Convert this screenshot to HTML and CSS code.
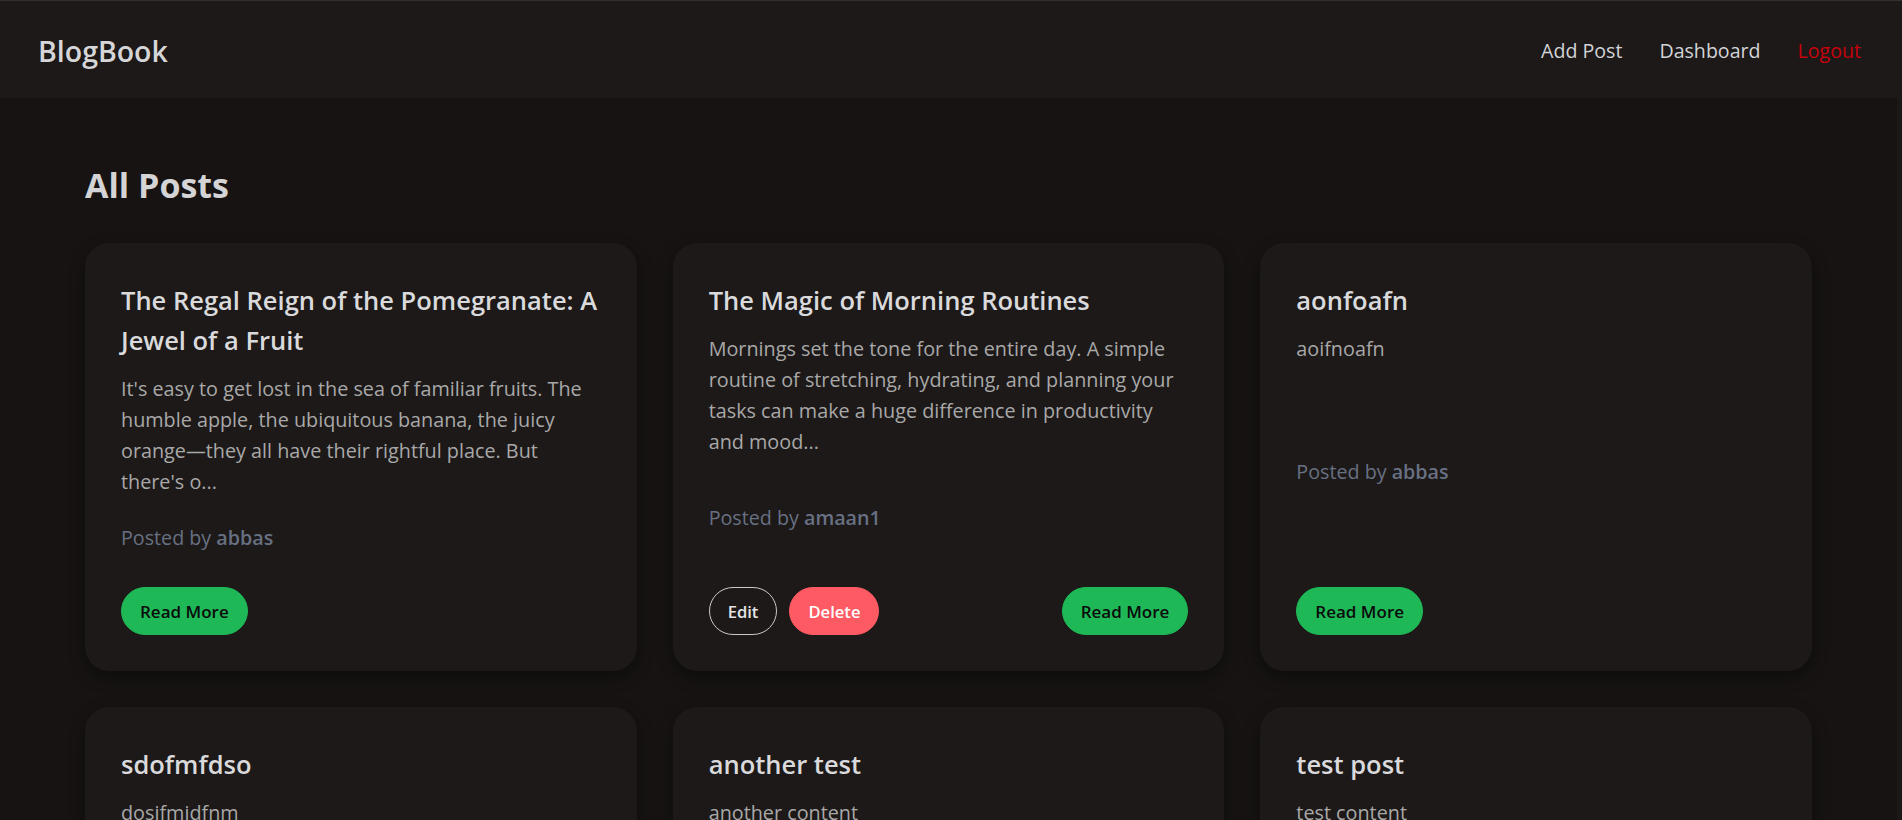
FILE: index.html
```html
<!DOCTYPE html>
<html lang="en">
<head>
<meta charset="utf-8">
<title>BlogBook</title>
<link rel="stylesheet" href="styles.css">
</head>
<body>
<header class="navbar">
  <a class="brand" href="#">BlogBook</a>
  <nav class="nav-links">
    <a href="#">Add Post</a>
    <a href="#">Dashboard</a>
    <a href="#" class="logout">Logout</a>
  </nav>
</header>
<main class="main">
  <h1 class="page-title">All Posts</h1>
  <div class="post-grid">
    <article class="post-card">
      <div class="post-body">
        <h2 class="post-title">The Regal Reign of the Pomegranate: A Jewel of a Fruit</h2>
        <p class="post-excerpt">It's easy to get lost in the sea of familiar fruits. The humble apple, the ubiquitous banana, the juicy orange—they all have their rightful place. But there's o...</p>
      </div>
      <p class="post-author">Posted by <strong>abbas</strong></p>
      <div class="post-actions">
        <a class="btn btn-read" href="#">Read More</a>
      </div>
    </article>
    <article class="post-card">
      <div class="post-body">
        <h2 class="post-title">The Magic of Morning Routines</h2>
        <p class="post-excerpt">Mornings set the tone for the entire day. A simple routine of stretching, hydrating, and planning your tasks can make a huge difference in productivity and mood...</p>
      </div>
      <p class="post-author">Posted by <strong>amaan1</strong></p>
      <div class="post-actions">
        <div class="owner-actions">
          <a class="btn btn-edit" href="#">Edit</a>
          <a class="btn btn-delete" href="#">Delete</a>
        </div>
        <a class="btn btn-read" href="#">Read More</a>
      </div>
    </article>
    <article class="post-card">
      <div class="post-body">
        <h2 class="post-title">aonfoafn</h2>
        <p class="post-excerpt">aoifnoafn</p>
      </div>
      <p class="post-author">Posted by <strong>abbas</strong></p>
      <div class="post-actions">
        <a class="btn btn-read" href="#">Read More</a>
      </div>
    </article>
    <article class="post-card">
      <div class="post-body">
        <h2 class="post-title">sdofmfdso</h2>
        <p class="post-excerpt">dosifmidfnm</p>
      </div>
      <p class="post-author">Posted by <strong>abbas</strong></p>
      <div class="post-actions">
        <a class="btn btn-read" href="#">Read More</a>
      </div>
    </article>
    <article class="post-card">
      <div class="post-body">
        <h2 class="post-title">another test</h2>
        <p class="post-excerpt">another content</p>
      </div>
      <p class="post-author">Posted by <strong>abbas</strong></p>
      <div class="post-actions">
        <a class="btn btn-read" href="#">Read More</a>
      </div>
    </article>
    <article class="post-card">
      <div class="post-body">
        <h2 class="post-title">test post</h2>
        <p class="post-excerpt">test content</p>
      </div>
      <p class="post-author">Posted by <strong>abbas</strong></p>
      <div class="post-actions">
        <a class="btn btn-read" href="#">Read More</a>
      </div>
    </article>
  </div>
</main>
</body>
</html>
```
FILE: styles.css
```css
* {
  box-sizing: border-box;
}

html {
  background: #1b1918;
}

body {
  margin: 0;
  background: #1b1918;
  font-family: "Open Sans", "Noto Sans", sans-serif;
  color: #dcdcdc;
}

a {
  text-decoration: none;
  color: inherit;
}

.navbar {
  height: 98px;
  border-top: 1px solid #303030;
  background: #1c1918;
  display: flex;
  align-items: center;
  justify-content: space-between;
  padding: 2px 41px 0 38px;
}

.brand {
  font-size: 28.5px;
  font-weight: 600;
  color: #d6d6d8;
}

.nav-links {
  display: flex;
  gap: 37px;
  font-size: 19.6px;
}

.nav-links a {
  color: #d2d3d6;
}

.nav-links .logout {
  color: #c8000c;
}

.main {
  margin-right: 5px;
  background: #161312;
  padding: 65px 85px 60px;
}

.page-title {
  margin: 0 0 36px;
  font-size: 34px;
  line-height: 44px;
  font-weight: 700;
  color: #d4d4d6;
}

.post-grid {
  display: grid;
  grid-template-columns: repeat(3, 1fr);
  gap: 36px;
}

.post-card {
  background: #1c1918;
  border-radius: 24px;
  padding: 37px 36px 36px;
  display: flex;
  flex-direction: column;
  justify-content: space-between;
  box-shadow: 0 6px 16px rgba(0, 0, 0, 0.35);
}

.post-title {
  margin: 0;
  font-size: 25.5px;
  line-height: 40px;
  font-weight: 600;
  color: #dadadc;
}

.post-excerpt {
  margin: 13px 0 0;
  font-size: 19.8px;
  line-height: 31px;
  color: #a9a8a8;
}

.post-author {
  margin: 26px 0 0;
  font-size: 19.7px;
  line-height: 30px;
  color: #687083;
}

.post-author strong {
  font-weight: 600;
}

.post-actions {
  margin-top: 34px;
  display: flex;
  align-items: center;
  justify-content: space-between;
}

.owner-actions {
  display: flex;
  gap: 12px;
}

.btn {
  display: inline-flex;
  align-items: center;
  justify-content: center;
  height: 48px;
  padding: 0 18px;
  border-radius: 999px;
  border: 1px solid transparent;
  font-size: 16.6px;
  font-weight: 600;
}

.btn-read {
  background: #1fb857;
  border-color: #1fb857;
  color: #0b0b0b;
  font-size: 17px;
  font-weight: 600;
}

.btn-edit {
  border-color: #c9c9c9;
  color: #e4e4e6;
}

.btn-delete {
  background: #fe5a64;
  border-color: #fe5a64;
  color: #ffffff;
}
```
